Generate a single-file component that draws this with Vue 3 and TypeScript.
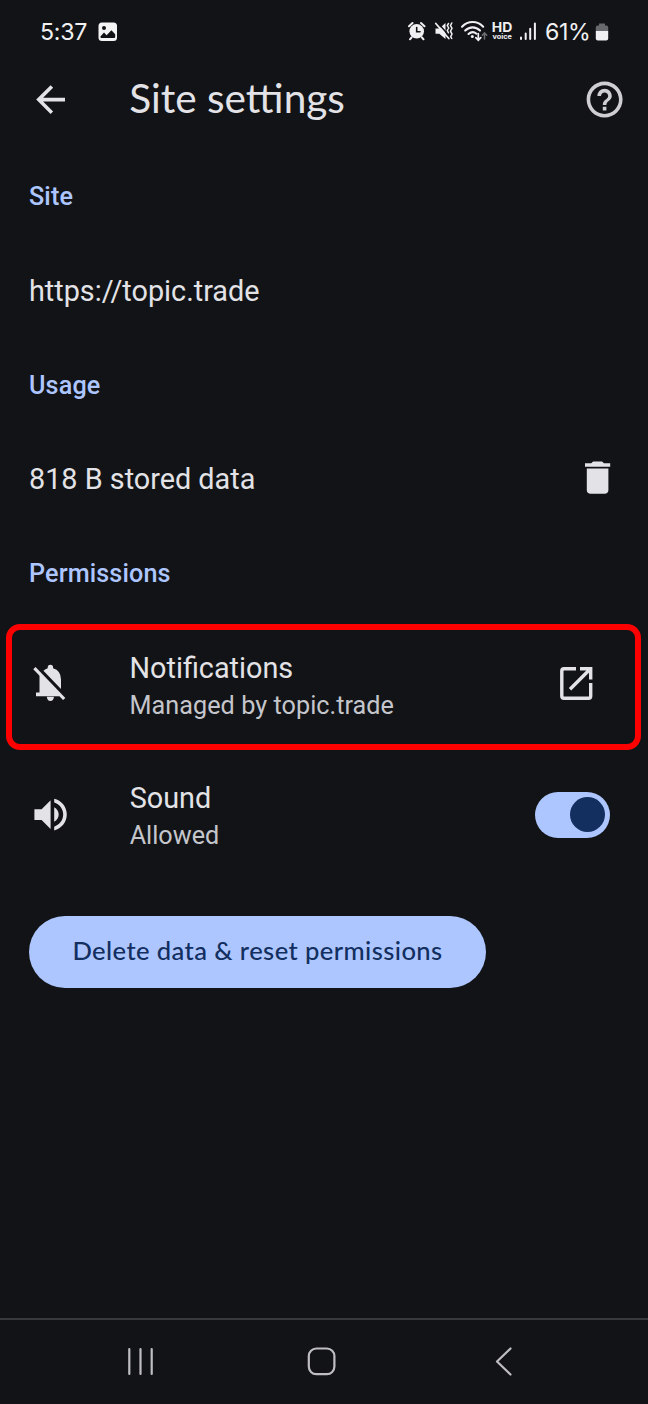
<script setup lang="ts">
interface Row {
  kind: 'heading' | 'value'
  text: string
  action?: 'delete'
}

const rows: Row[] = [
  { kind: 'heading', text: 'Site' },
  { kind: 'value', text: 'https://topic.trade' },
  { kind: 'heading', text: 'Usage' },
  { kind: 'value', text: '818 B stored data', action: 'delete' },
  { kind: 'heading', text: 'Permissions' },
]
</script>

<template>
  <div class="screen">
    <header class="status">
      <span class="clock">5:37</span>
      <svg class="photo" width="20" height="20" viewBox="0 0 20 20">
        <rect x="0.5" y="0.5" width="18.5" height="18.5" rx="3.5" fill="#f4f4f5" />
        <circle cx="6" cy="6" r="2" fill="#121316" />
        <path d="M2.4 14.5 6 10.6l2.6 2.6 4.8-5 3.8 4v2.6c0 .8-.5 1.3-1.3 1.3H3.7c-.8 0-1.3-.6-1.3-1.6z" fill="#121316" />
      </svg>
      <div class="spacer"></div>
      <svg class="indicators" width="130" height="24" viewBox="408 20 130 24">
        <g fill="none" stroke="#f0f0f2" stroke-linecap="round">
          <path d="M409 26.3 412.5 23M424.5 26.3 421 23M411.5 37.5 410 39.3M422 37.5 423.5 39.3" stroke-width="2" />
          <circle cx="416.7" cy="31.3" r="7.3" fill="#f0f0f2" stroke="none" />
          <path d="M416.7 27.5V31.8H420" stroke="#121316" stroke-width="1.6" />
          <path d="M435.5 28.5h3.8l6.2-5.5v16l-6.2-5.2h-3.8z" fill="#f0f0f2" stroke="none" />
          <path d="M437.5 22.5 450 36.8" stroke="#121316" stroke-width="1.5" />
          <path d="M435.8 23.5 448.8 38.5" stroke-width="1.8" />
          <path d="M448.5 23.5l-1.2 2 1.4 2.5-1.4 2.5 1.2 2.3M451.8 23l-1.3 2.5 1.5 2.8-1.5 2.9 1.5 2.9-1.3 2.6 1 1.8" stroke-width="1.5" />
          <path d="M462 26.7C468 20.5 477.3 20.5 483.2 26.7M465.2 30.6c4.4-4.3 10.5-4.3 14.8 0M468.5 34c2.5-2.3 5.6-2.3 8-.3" stroke-width="2.1" />
          <circle cx="472.3" cy="36.6" r="1.5" fill="#f0f0f2" stroke="none" />
          <path d="M478.3 33.5V40M475.8 37.6l2.5 2.6 2.5-2.6" stroke-width="1.7" />
          <path d="M484.5 39V33M482.3 35.2l2.2-2.4 2.2 2.4" stroke="#6d6e72" stroke-width="1.5" />
          <path d="M521 37.5v1.5M525.7 33.5V39M530.2 28.8V39M534.9 23.5V39" stroke-width="2" />
        </g>
        <text x="491.8" y="31.8" class="hd" textLength="20.5" lengthAdjust="spacingAndGlyphs">HD</text>
        <text x="492.5" y="38.8" class="voice" textLength="19.5" lengthAdjust="spacingAndGlyphs">voice</text>
      </svg>
      <span class="percent">61%</span>
      <svg class="battery" width="14" height="20" viewBox="0 0 14 20">
        <path d="M4 1.5h6v2h1.5Q13.2 3.5 13.2 5.5V9H.8V5.5Q.8 3.5 2.5 3.5H4z" fill="#68696c" />
        <path d="M.8 9h12.4v7.5q0 2-2 2H2.8q-2 0-2-2z" fill="#f0f0f2" />
      </svg>
    </header>

    <div class="toolbar">
      <svg class="icon" viewBox="0 0 24 24">
        <path d="M20 11H7.83l5.59-5.59L12 4l-8 8 8 8 1.41-1.41L7.83 13H20v-2z" />
      </svg>
      <h1>Site settings</h1>
      <svg class="icon help" viewBox="0 0 24 24">
        <path d="M11 18h2v-2h-2v2zm1-16C6.48 2 2 6.48 2 12s4.48 10 10 10 10-4.48 10-10S17.52 2 12 2zm0 18c-4.41 0-8-3.59-8-8s3.59-8 8-8 8 3.59 8 8-3.59 8-8 8zm0-14c-2.21 0-4 1.79-4 4h2c0-1.1.9-2 2-2s2 .9 2 2c0 2-3 1.75-3 5h2c0-2.25 3-2.5 3-5 0-2.21-1.79-4-4-4z" />
      </svg>
    </div>

    <main>
      <div v-for="row in rows" :key="row.text" class="row" :class="row.kind">
        <span>{{ row.text }}</span>
        <svg v-if="row.action" class="icon trash" viewBox="0 0 24 24">
          <path d="M6 19c0 1.1.9 2 2 2h8c1.1 0 2-.9 2-2V7H6v12zM19 4h-3.5l-1-1h-5l-1 1H5v2h14V4z" />
        </svg>
      </div>

      <div class="permission marked">
        <svg class="lead" width="36" height="42" viewBox="32 662 36 42">
          <path d="M46.8 696.8h7.2q-.5 4.2-3.6 4.2t-3.6-4.2z" />
          <path d="M39.5 673.5 61 695.8 59 696.2H36v-3.7h3.5z" />
          <path d="M43.4 670.7Q45.5 668.8 47.7 668.2V667.5a2.7 2.7 0 0 1 5.4 0v.7Q61 670.5 61 679.5V688.9z" />
          <path d="M34.4 668.2 64.2 699" fill="none" stroke="#e3e3e7" stroke-width="3.2" />
        </svg>
        <div class="labels">
          <div class="name">Notifications</div>
          <div class="detail managed">Managed by topic.trade</div>
        </div>
        <svg class="open" width="36" height="36" viewBox="558 665 36 36">
          <path d="M576 668.8H564a2.2 2.2 0 0 0-2.2 2.2V696a2.2 2.2 0 0 0 2.2 2.2H588.5a2.2 2.2 0 0 0 2.2-2.2V683M580 668.8H590.7V679.5M570 689.2 590 669.2" fill="none" stroke="#e3e3e7" stroke-width="3.4" />
        </svg>
      </div>

      <div class="permission">
        <svg class="icon" viewBox="0 0 24 24">
          <path d="M3 9v6h4l5 5V4L7 9H3zm13.5 3c0-1.77-1.02-3.29-2.5-4.03v8.05c1.48-.73 2.5-2.25 2.5-4.02zM14 3.23v2.06c2.89.86 5 3.54 5 6.71s-2.11 5.85-5 6.71v2.06c4.01-.91 7-4.49 7-8.77s-2.99-7.86-7-8.77z" />
        </svg>
        <div class="labels lower">
          <div class="name">Sound</div>
          <div class="detail">Allowed</div>
        </div>
        <div class="switch"><span></span></div>
      </div>

      <button class="reset"><span>Delete data &amp; reset permissions</span></button>
    </main>

    <nav>
      <svg width="648" height="84" viewBox="0 1320 648 84">
        <g fill="none" stroke="#bfbfc3" stroke-width="2.2" stroke-linecap="round" stroke-linejoin="round">
          <path d="M129.3 1349v25M140.5 1349v25M151.7 1349v25" />
          <rect x="308.8" y="1348.5" width="25.6" height="25.6" rx="7.5" />
          <path d="M510.5 1348.5 497 1361.5 510.5 1374.5" />
        </g>
      </svg>
    </nav>
  </div>
</template>

<style>
html,
body {
  background: #121316;
}
</style>

<style scoped>
.screen {
  width: 648px;
  height: 1404px;
  box-sizing: border-box;
  overflow: hidden;
  display: flex;
  flex-direction: column;
  background: #121316;
  color: #e3e3e7;
  font-family: Roboto, "Noto Sans", sans-serif;
}
.status {
  display: flex;
  align-items: center;
  height: 62px;
  padding: 2px 39.5px 0 40px;
  box-sizing: border-box;
  color: #f0f0f2;
  flex: none;
}
.clock,
.percent {
  font-family: Inter, sans-serif;
  font-size: 23.2px;
  line-height: 28px;
  white-space: nowrap;
}
.clock {
  width: 57.5px;
  letter-spacing: -0.3px;
}
.percent {
  width: 49.5px;
  margin-left: 7px;
  letter-spacing: -0.4px;
}
.spacer {
  flex: 1;
}
.hd {
  font: 700 13px Inter, sans-serif;
  fill: #f0f0f2;
}
.voice {
  font: 700 7px/7px Inter, sans-serif;
  fill: #f0f0f2;
}
.icon {
  width: 43.2px;
  height: 43.2px;
  fill: #e3e3e7;
  flex: none;
}
.toolbar {
  display: flex;
  align-items: center;
  height: 74px;
  padding: 0 21.5px 0 29px;
  flex: none;
}
.toolbar .icon {
  margin-top: 1px;
}
.toolbar h1 {
  flex: 1;
  margin: 0 0 3px 57px;
  font: 400 40.6px/48px Lato, Roboto, sans-serif;
  white-space: nowrap;
}
.toolbar .help {
  fill: #cfcfd3;
}
main {
  flex: 1;
  padding-top: 13.5px;
}
.row {
  display: flex;
  align-items: center;
  justify-content: space-between;
  height: 94.25px;
  padding: 0 29px;
  font-size: 28.8px;
}
.heading {
  font-size: 25.2px;
  font-weight: 500;
  letter-spacing: 0.12px;
  color: #adc6ff;
}
.trash {
  margin-bottom: 3px;
}
.permission {
  display: flex;
  align-items: center;
  height: 130px;
  padding: 0 38px 0 29px;
  box-sizing: border-box;
}
.permission.marked {
  height: 126px;
  margin: 3.25px 7px 0 6px;
  padding: 0 41px 0 20px;
  border: 6px solid #ff0000;
  border-radius: 14px;
}
.lead {
  fill: #e3e3e7;
  margin-bottom: 8px;
}
.open {
  margin-bottom: 8px;
}
.labels {
  flex: 1;
  margin-left: 57.5px;
}
.marked .labels {
  margin: 0 0 1px 61.5px;
}
.labels.lower {
  margin-top: 4px;
}
.name {
  font-size: 28.8px;
  line-height: 37px;
}
.detail {
  font-size: 25.2px;
  line-height: 37px;
  color: #c4c6cc;
}
.managed {
  letter-spacing: 0.05px;
}
.switch {
  width: 75px;
  height: 46px;
  box-sizing: border-box;
  margin-bottom: 1px;
  padding: 5.5px;
  border-radius: 23px;
  background: #adc6ff;
  display: flex;
  justify-content: flex-end;
}
.switch span {
  width: 35px;
  height: 35px;
  border-radius: 50%;
  background: #122f60;
}
.reset {
  display: block;
  width: 457px;
  height: 72px;
  margin: 35.5px 0 0 29px;
  padding: 0 0 3px;
  border: 0;
  border-radius: 36px;
  background: #adc6ff;
  color: #122f60;
  font: 500 25.6px/32px Lato, Roboto, sans-serif;
  letter-spacing: 0.4px;
  white-space: nowrap;
}
nav {
  height: 84px;
  border-top: 2px solid #38393c;
  flex: none;
}
nav svg {
  display: block;
}
</style>
